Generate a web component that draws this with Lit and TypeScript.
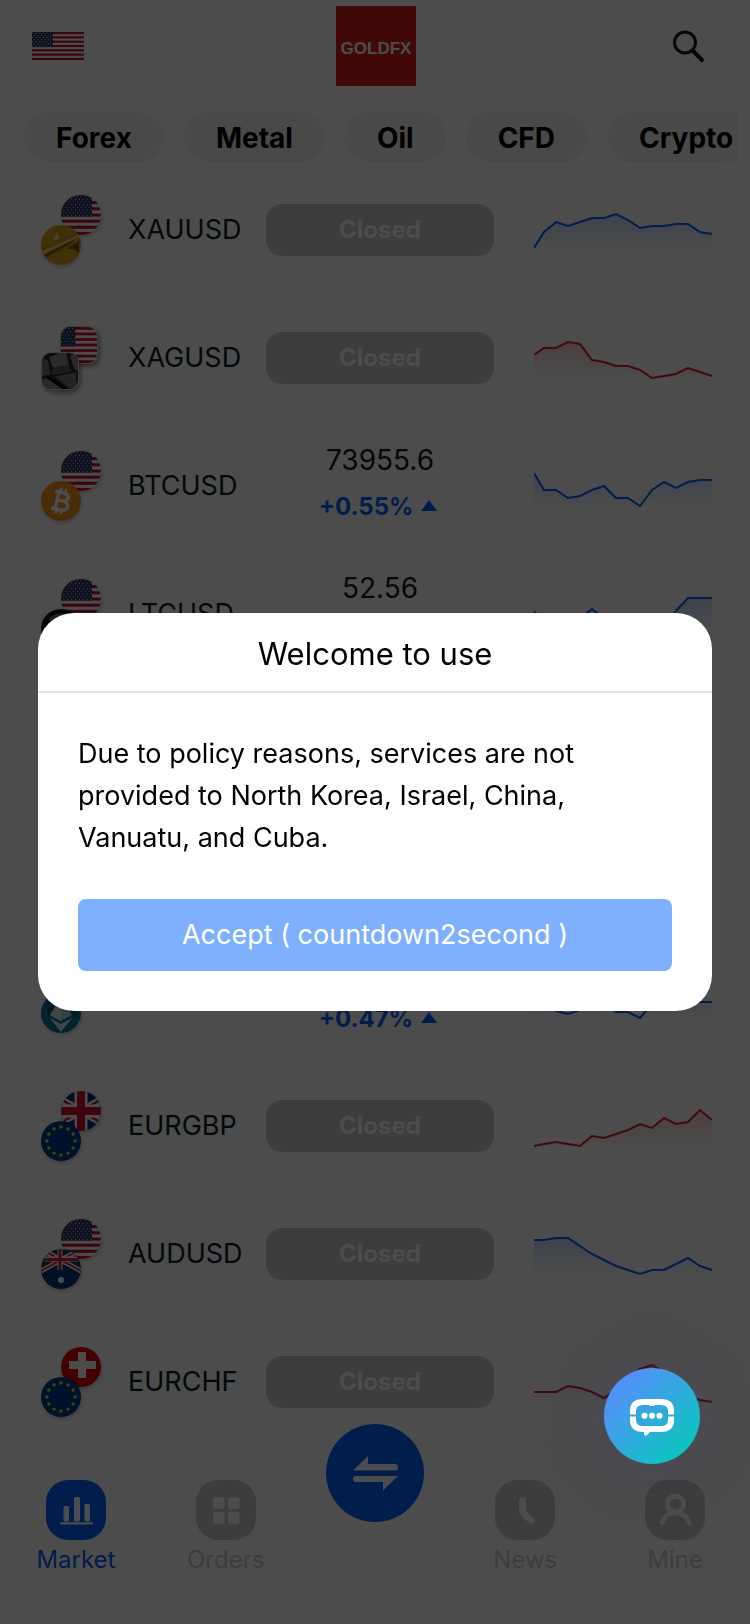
import { html, svg, css, nothing, LitElement } from 'lit';
import { customElement, property, state } from 'lit/decorators.js';
import { classMap } from 'lit/directives/class-map.js';

interface Quote {
    name?: string;
    base?: string;
    quote?: string;
    square?: boolean;
    closed?: boolean;
    price?: string;
    change?: string;
    trend: 'up' | 'down';
    points: number[];
}

const QUOTES: Quote[] = [
    { name: 'XAUUSD', base: 'gold', quote: 'us', closed: true, trend: 'up', points: [42, 26, 16, 20, 16, 12, 12, 8, 14, 22, 20, 20, 18, 18, 26, 28] },
    { name: 'XAGUSD', base: 'silver', quote: 'usSquare', square: true, closed: true, trend: 'down', points: [21, 14, 14, 8, 10, 26, 28, 32, 32, 36, 44, 42, 40, 34, 38, 42] },
    { name: 'BTCUSD', base: 'btc', quote: 'us', price: '73955.6', change: '+0.55%', trend: 'up', points: [11, 28, 28, 36, 34, 28, 24, 36, 36, 44, 28, 20, 26, 20, 18, 18] },
    { name: 'LTCUSD', base: 'ltc', quote: 'us', price: '52.56', trend: 'up', points: [21, 34, 34, 30, 28, 19, 28, 34, 38, 38, 44, 36, 21, 8, 8, 8] },
    { trend: 'up', points: [] },
    { trend: 'up', points: [] },
    { base: 'eth', quote: 'us', change: '+0.47%', trend: 'up', points: [24, 30, 37, 40, 36, 28, 30, 38, 38, 44, 30, 24, 28, 28, 28, 28] },
    { name: 'EURGBP', base: 'eu', quote: 'gb', closed: true, trend: 'down', points: [44, 42, 40, 42, 44, 34, 36, 32, 28, 22, 26, 16, 22, 20, 8, 18] },
    { name: 'AUDUSD', base: 'au', quote: 'us', closed: true, trend: 'up', points: [10, 10, 8, 8, 16, 24, 30, 36, 40, 44, 40, 40, 34, 28, 36, 40] },
    { name: 'EURCHF', base: 'eu', quote: 'ch', closed: true, trend: 'down', points: [34, 34, 34, 28, 30, 34, 40, 32, 20, 11, 7, 14, 28, 38, 42, 44] },
    { trend: 'up', points: [] },
];

const CATEGORIES = ['Forex', 'Metal', 'Oil', 'CFD', 'Crypto'];

// US flag for any box: thirteen stripes, canton and a grid of dots for the stars
const usFlag = (w: number, h: number, cantonW: number, cols: number, rows: number) => {
    const stripe = h / 13;
    const cantonH = stripe * 7;
    const stars = [];
    for (let r = 0; r < rows; r++) {
        for (let c = 0; c < cols; c++) {
            const shift = r % 2 ? 0.75 : 0.25;
            stars.push(svg`<circle cx=${((c + shift) * cantonW) / cols} cy=${((r + 0.5) * cantonH) / rows} r="0.6" fill="#fff"/>`);
        }
    }
    return svg`
        <rect width=${w} height=${h} fill="#fff"/>
        ${[0, 2, 4, 6, 8, 10, 12].map((i) => svg`<rect y=${i * stripe} width=${w} height=${stripe} fill="#c8102e"/>`)}
        <rect width=${cantonW} height=${cantonH} fill="#2e3367"/>
        ${stars}`;
};

const euFlag = () => svg`
    <rect width="40" height="40" fill="#003f8f"/>
    ${Array.from({ length: 12 }, (_, i) => {
        const a = (i * Math.PI) / 6;
        return svg`<circle cx=${20 + 14 * Math.sin(a)} cy=${20 - 14 * Math.cos(a)} r="1.7" fill="#e6dc1e"/>`;
    })}`;

const COINS: Record<string, () => unknown> = {
    us: () => usFlag(40, 40, 31, 8, 8),
    usSquare: () => usFlag(40, 40, 16, 4, 6),
    eu: euFlag,
    gold: () => svg`
        <rect width="40" height="40" fill="#d9a520"/>
        <path d="M0 24 L40 4 V17 L4 33z" fill="#c4962a"/>
        <path d="M1 26 L40 9 V13 L3 31z" fill="#e9cf6a"/>
        <path d="M2 30 L32 15 L38 12 L30 18 L5 32z" fill="#8a6210"/>
        <path d="M12 13 l4 -5 l3 5 l-5 2z" fill="#f0e3a8"/>
        <path d="M26 24 l12 -8 v12 l-5 -4z" fill="#7b5a10"/>`,
    silver: () => svg`
        <rect width="40" height="40" fill="#262626"/>
        <path d="M8 5 L19 0 H27 L30 14 L12 16z" fill="#8d8d8d"/>
        <path d="M12 16 L30 14 L33 21 L10 25z" fill="#5c5c5c"/>
        <path d="M0 5 L7 9 L9 24 L0 26z" fill="#777"/>
        <path d="M31 3 L40 0 V20 L36 18z" fill="#888"/>
        <path d="M14 26 L38 21 V38 L30 39z" fill="#777"/>
        <path d="M0 29 L7 28 L22 40 H0z" fill="#8a8a8a"/>
        <path d="M6 25 L29 40 H23 L4 27z" fill="#000"/>`,
    btc: () => svg`
        <rect width="40" height="40" fill="#f7931a"/>
        <g transform="rotate(13 20 20)" fill="none" stroke="#fff" stroke-width="3.6">
            <path d="M12 11.5 H21 C28 11.5 28 19.5 21 19.5 H17 M21 19.5 C30 19.5 30 29 21 29 H12 M16 11.5 V29"/>
            <path d="M17.5 7 V12 M22.5 7 V12 M17.5 28 V33 M22.5 28 V33" stroke-width="2.6"/>
        </g>`,
    ltc: () => svg`
        <rect width="40" height="40" fill="#151515"/>
        <path d="M8 10 C14 3 26 3 32 8 L27 12 C21 8 14 9 10 13z" fill="#777"/>`,
    eth: () => svg`
        <rect width="40" height="40" fill="#087a96"/>
        <path d="M5 6 L15 14 L7 24z M34 8 L27 19 L36 25z" fill="#0b5268"/>
        <path d="M20 5 L31 22 L20 28 L9 22z" fill="#a8d5df"/>
        <path d="M20 5 V28 L9 22z" fill="#d8eef2"/>
        <path d="M9 25 L20 31 L31 25 L20 39z" fill="#d4f0f4"/>`,
    gb: () => svg`
        <rect width="40" height="40" fill="#012a8a"/>
        <path d="M-4 6 L44 34 M-4 34 L44 6" stroke="#fff" stroke-width="7"/>
        <path d="M-4 6 L44 34 M-4 34 L44 6" stroke="#d8102e" stroke-width="2.5"/>
        <path d="M20 0 V40 M0 20 H40" stroke="#fff" stroke-width="13"/>
        <path d="M20 0 V40 M0 20 H40" stroke="#d8102e" stroke-width="8"/>`,
    au: () => svg`
        <rect width="40" height="40" fill="#043a7a"/>
        <path d="M-2 -1 L40 22 M42 -1 L0 22" stroke="#fff" stroke-width="5"/>
        <path d="M-2 -1 L40 22 M42 -1 L0 22" stroke="#e0323c" stroke-width="2"/>
        <path d="M19 0 V21 M3 10 H37" stroke="#fff" stroke-width="5"/>
        <path d="M19 0 V21 M1 10.5 H39" stroke="#d8202e" stroke-width="3"/>
        <circle cx="20" cy="31" r="3" fill="#fff"/>`,
    ch: () => svg`
        <rect width="40" height="40" fill="#e00000"/>
        <path d="M17 5 h8 v9 h10 v8 h-10 v9 h-8 v-9 h-9 v-8 h9z" fill="#fff"/>`,
};

@customElement('market-row')
export class MarketRow extends LitElement {
    static styles = css`
    :host {
        display: block;
    }
    .card {
        display: grid;
        grid-template-columns: 67px 118px 1fr 198px;
        align-items: center;
        column-gap: 20px;
        height: 120px;
        padding: 0 26px 0 29px;
        box-sizing: border-box;
        background-color: #ffffff;
        border-radius: 24px;
        box-shadow: 0 0 20px rgba(0, 0, 0, 0.03);
    }
    .pair {
        display: grid;
        width: 60px;
        height: 70px;
    }
    .coin {
        grid-area: 1 / 1;
        width: 40px;
        height: 40px;
        border-radius: 50%;
        box-shadow: 1px 2px 4px rgba(0, 0, 0, 0.2);
    }
    .quote {
        place-self: start end;
    }
    .base {
        place-self: end start;
    }
    .square {
        width: 57px;
        height: 64px;
    }
    .square .coin {
        width: 36px;
        height: 36px;
        border-radius: 10px;
        border: 1px solid #dddddd;
        box-shadow: 2px 3px 4px rgba(0, 0, 0, 0.4);
    }
    .name, .price {
        font-size: 28px;
        line-height: 40px;
        color: #0b1d2a;
    }
    .name {
        font-size: 27px;
    }
    .closed {
        height: 52px;
        line-height: 52px;
        border-radius: 16px;
        background-color: #cccccc;
        color: #ffffff;
        font-size: 24px;
        font-weight: 700;
        text-align: center;
    }
    .figures {
        display: flex;
        flex-direction: column;
        align-items: center;
        gap: 6px;
        padding-bottom: 6px;
    }
    .price {
        height: 40px;
    }
    .change {
        display: flex;
        align-items: center;
        gap: 8px;
        height: 40px;
        padding-right: 4px;
        font-size: 24px;
        font-weight: 700;
        color: #0062ff;
    }
    .chart {
        display: block;
        width: 100%;
        height: 48px;
        box-sizing: border-box;
        padding-left: 20px;
    }
  `;

    @property({ attribute: false })
    item: Quote = { trend: 'up', points: [] };

    renderPair() {
        const { base, quote, square } = this.item;
        const coin = (kind: string, place: string) => html`
            <svg class=${`coin ${place}`} viewBox="0 0 40 40" aria-hidden="true">${COINS[kind]()}</svg>`;
        return html`
            <div class=${classMap({ pair: true, square: !!square })}>
                ${quote ? coin(quote, 'quote') : nothing}
                ${base ? coin(base, 'base') : nothing}
            </div>`;
    }

    renderFigures() {
        if (this.item.closed) {
            return html`<div class="closed">Closed</div>`;
        }
        return html`
            <div class="figures">
                <div class="price">${this.item.price}</div>
                <div class="change">
                    ${this.item.change ? html`
                        <span>${this.item.change}</span>
                        <svg width="16" height="12" viewBox="0 0 16 12" aria-hidden="true"><path d="M8 0 L16 11 H0z" fill="#0062ff"/></svg>
                    ` : nothing}
                </div>
            </div>`;
    }

    renderChart() {
        const { points, trend } = this.item;
        if (!points.length) {
            return html`<span></span>`;
        }
        const color = trend === 'up' ? '#0062ff' : '#e0202c';
        const line = points.map((y, i) => `${i ? i * 12 - 2 : 0},${y}`).join(' ');
        return html`
            <svg class="chart" viewBox="0 0 178 48" preserveAspectRatio="none" aria-hidden="true">
                <defs>
                    <linearGradient id="fade" x1="0" y1="0" x2="0" y2="48" gradientUnits="userSpaceOnUse">
                        <stop offset="0" stop-color=${color} stop-opacity="0.25"/>
                        <stop offset="0.9" stop-color=${color} stop-opacity="0.02"/>
                        <stop offset="1" stop-color=${color} stop-opacity="0"/>
                    </linearGradient>
                </defs>
                <polygon points=${`0,48 ${line} 178,48`} fill="url(#fade)"/>
                <polyline points=${line} fill="none" stroke=${color} stroke-width="2"/>
            </svg>`;
    }

    render() {
        return html`
            <div class="card">
                ${this.renderPair()}
                <div class="name">${this.item.name}</div>
                ${this.renderFigures()}
                ${this.renderChart()}
            </div>
        `;
    }
}

@customElement('tab-bar')
export class TabBar extends LitElement {
    static styles = css`
    :host {
        display: block;
    }
    .bar {
        display: grid;
        grid-template-columns: repeat(5, 1fr);
        height: 156px;
        padding: 12px 0 0 1px;
        box-sizing: border-box;
        background-color: #ffffff;
        box-shadow: 0 -4px 20px rgba(0, 0, 0, 0.03);
    }
    .tab {
        display: flex;
        flex-direction: column;
        align-items: center;
        gap: 4px;
        color: #cccccc;
        font-size: 24px;
        line-height: 32px;
        text-decoration: none;
    }
    .tab svg {
        width: 60px;
        height: 60px;
        border-radius: 22px;
        background-color: currentColor;
    }
    .active {
        color: #0062ff;
    }
    .trade {
        justify-self: center;
        width: 98px;
        height: 98px;
        margin-top: -56px;
        padding: 0;
        border: none;
        border-radius: 50%;
        background-color: #0062ff;
        cursor: pointer;
    }
    .trade svg {
        display: block;
    }
  `;

    render() {
        return html`
            <nav class="bar">
                <a class="tab active" href="#market">
                    <svg viewBox="0 0 60 60" fill="#fff" aria-hidden="true">
                        <rect x="17.5" y="26" width="5.5" height="15.5" rx="1.5"/>
                        <rect x="28" y="17" width="6" height="24.5" rx="1.5"/>
                        <rect x="38.5" y="24" width="5.5" height="17.5" rx="1.5"/>
                        <rect x="14" y="42.3" width="33" height="2.2" rx="1.1"/>
                    </svg>
                    Market
                </a>
                <a class="tab" href="#orders">
                    <svg viewBox="0 0 60 60" fill="#fff" aria-hidden="true">
                        <rect x="17" y="17.2" width="11.6" height="11.8" rx="2.5"/>
                        <rect x="32" y="17.2" width="11.6" height="11.8" rx="2.5"/>
                        <rect x="17" y="32" width="11.6" height="11.8" rx="2.5"/>
                        <rect x="32" y="32" width="11.6" height="11.8" rx="2.5"/>
                    </svg>
                    Orders
                </a>
                <button class="trade" aria-label="Trade">
                    <svg viewBox="0 0 98 98" fill="#fff" aria-hidden="true">
                        <path d="M27 46.5 L42 32 V40 H69 Q72 40 72 43 Q72 46.5 69 46.5z"/>
                        <path d="M72 52 L57 66.5 V58 H30 Q27 58 27 55 Q27 52 30 52z"/>
                    </svg>
                </button>
                <a class="tab" href="#news">
                    <svg viewBox="0 0 60 60" aria-hidden="true">
                        <path d="M25.5 19.5 H29.5 V31.5 L38.5 40.5 L36 43 L25.5 32.5z" fill="#fff" stroke="#fff" stroke-width="3" stroke-linejoin="round"/>
                    </svg>
                    News
                </a>
                <a class="tab" href="#mine">
                    <svg viewBox="0 0 60 60" fill="none" stroke="#fff" stroke-width="5" stroke-linecap="round" aria-hidden="true">
                        <circle cx="30.5" cy="24" r="8"/>
                        <path d="M17.5 42.5 C20 29.4 41 29.4 43.5 42.5"/>
                    </svg>
                    Mine
                </a>
            </nav>
        `;
    }
}

@customElement('notice-dialog')
export class NoticeDialog extends LitElement {
    static styles = css`
    .mask {
        position: fixed;
        inset: 0;
        display: flex;
        align-items: center;
        padding: 0 38px;
        background-color: rgba(0, 0, 0, 0.7);
    }
    .dialog {
        flex: 1;
        overflow: hidden;
        background-color: #ffffff;
        border-radius: 36px;
        color: #000000;
    }
    .title {
        margin: 0;
        padding: 21px 0 17px;
        border-bottom: 2px solid #e5e5eb;
        font-size: 31px;
        font-weight: 400;
        line-height: 40px;
        text-align: center;
    }
    .content {
        display: flex;
        flex-direction: column;
        gap: 40px;
        padding: 40px;
        font-size: 27px;
        line-height: 42px;
    }
    .message {
        margin: 0;
    }
    .accept {
        height: 72px;
        padding: 0;
        border: none;
        border-radius: 8px;
        background-color: #0062ff;
        color: #ffffff;
        font: inherit;
        opacity: 0.5;
    }
  `;

    @property({ type: Number })
    countdown = 0;

    render() {
        return html`
            <div class="mask">
                <div class="dialog" role="dialog" aria-labelledby="title">
                    <h2 class="title" id="title">Welcome to use</h2>
                    <div class="content">
                        <p class="message">
                            Due to policy reasons, services are not provided to
                            North Korea, Israel, China, Vanuatu, and Cuba.
                        </p>
                        <button class="accept" disabled>Accept ( countdown${this.countdown}second )</button>
                    </div>
                </div>
            </div>
        `;
    }
}

@customElement('app-root')
export class AppRoot extends LitElement {
    static styles = css`
    :host {
        display: flex;
        flex-direction: column;
        height: 100vh;
        overflow: hidden;
        background-color: #ffffff;
        font-family: Inter, "Liberation Sans", sans-serif;
    }
    button {
        font: inherit;
        border: none;
        padding: 0;
        cursor: pointer;
    }
    .header {
        display: grid;
        grid-template-columns: 1fr 80px 1fr;
        align-items: center;
        padding: 6px 30px 6px 32px;
    }
    .language {
        width: 52px;
        height: 28px;
        background: none;
    }
    .language svg {
        display: block;
    }
    .logo {
        height: 80px;
        line-height: 86px;
        background-color: #d81b1b;
        color: #ffffff;
        font-family: "Liberation Sans", sans-serif;
        font-size: 17px;
        font-weight: 700;
        text-align: center;
    }
    .search {
        justify-self: end;
        width: 60px;
        height: 60px;
        border-radius: 12px;
        background-color: #ffffff;
        box-shadow: 0 0 20px rgba(0, 0, 0, 0.04);
    }
    .categories {
        display: flex;
        gap: 20px;
        margin: 20px 12px 8px;
        padding-left: 12px;
        overflow: hidden;
    }
    .category {
        flex: none;
        height: 50px;
        padding: 2px 32px 0;
        border-radius: 25px;
        background-color: #f3f3f3;
        color: #000000;
        font-size: 28px;
        font-weight: 700;
    }
    .list {
        flex: 1;
        display: flex;
        flex-direction: column;
        gap: 8px;
        min-height: 0;
        padding: 0 12px;
    }
    .tabs {
        z-index: 1;
    }
    .overlay {
        z-index: 2;
    }
    .chat {
        position: fixed;
        right: 50px;
        bottom: 160px;
        z-index: 3;
        width: 96px;
        height: 96px;
        border-radius: 50%;
        background: linear-gradient(135deg, #5a8cff 10%, #08c8bc 90%);
        box-shadow: 0 6px 60px rgba(64, 64, 128, 0.25);
    }
    .chat svg {
        display: block;
    }
  `;

    @state()
    countdown = 2;

    render() {
        return html`
            <header class="header">
                <button class="language" aria-label="Language">
                    <svg width="52" height="28" viewBox="0 0 52 28" aria-hidden="true">${usFlag(52, 28, 21, 6, 7)}</svg>
                </button>
                <div class="logo">GOLDFX</div>
                <button class="search" aria-label="Search">
                    <svg width="60" height="60" viewBox="0 0 60 60" fill="none" stroke="#0b1d2a" aria-hidden="true">
                        <circle cx="25" cy="26.5" r="10.5" stroke-width="3"/>
                        <path d="M33 35 L42 44" stroke-width="4" stroke-linecap="round"/>
                    </svg>
                </button>
            </header>
            <div class="categories">
                ${CATEGORIES.map((name) => html`<button class="category">${name}</button>`)}
            </div>
            <main class="list">
                ${QUOTES.map((item) => html`<market-row .item=${item}></market-row>`)}
            </main>
            <tab-bar class="tabs"></tab-bar>
            <notice-dialog class="overlay" countdown=${this.countdown}></notice-dialog>
            <button class="chat" aria-label="Chat">
                <svg viewBox="0 0 96 96" aria-hidden="true">
                    <path d="M29 46.5 V43 Q29 34 39 34 H57 Q67 34 67 43 V46.5 M29 48.5 V52 Q29 61 39 61 H57 Q67 61 67 52 V48.5" fill="none" stroke="#fff" stroke-width="6"/>
                    <path d="M40 62 V66 Q41 69 43 67 L48 62z M45 38 L48 34.5 L51 38z" fill="#fff"/>
                    <circle cx="40.5" cy="47.7" r="3" fill="#fff"/>
                    <circle cx="48" cy="47.7" r="3" fill="#fff"/>
                    <circle cx="55.5" cy="47.7" r="3" fill="#fff"/>
                </svg>
            </button>
        `;
    }
}
